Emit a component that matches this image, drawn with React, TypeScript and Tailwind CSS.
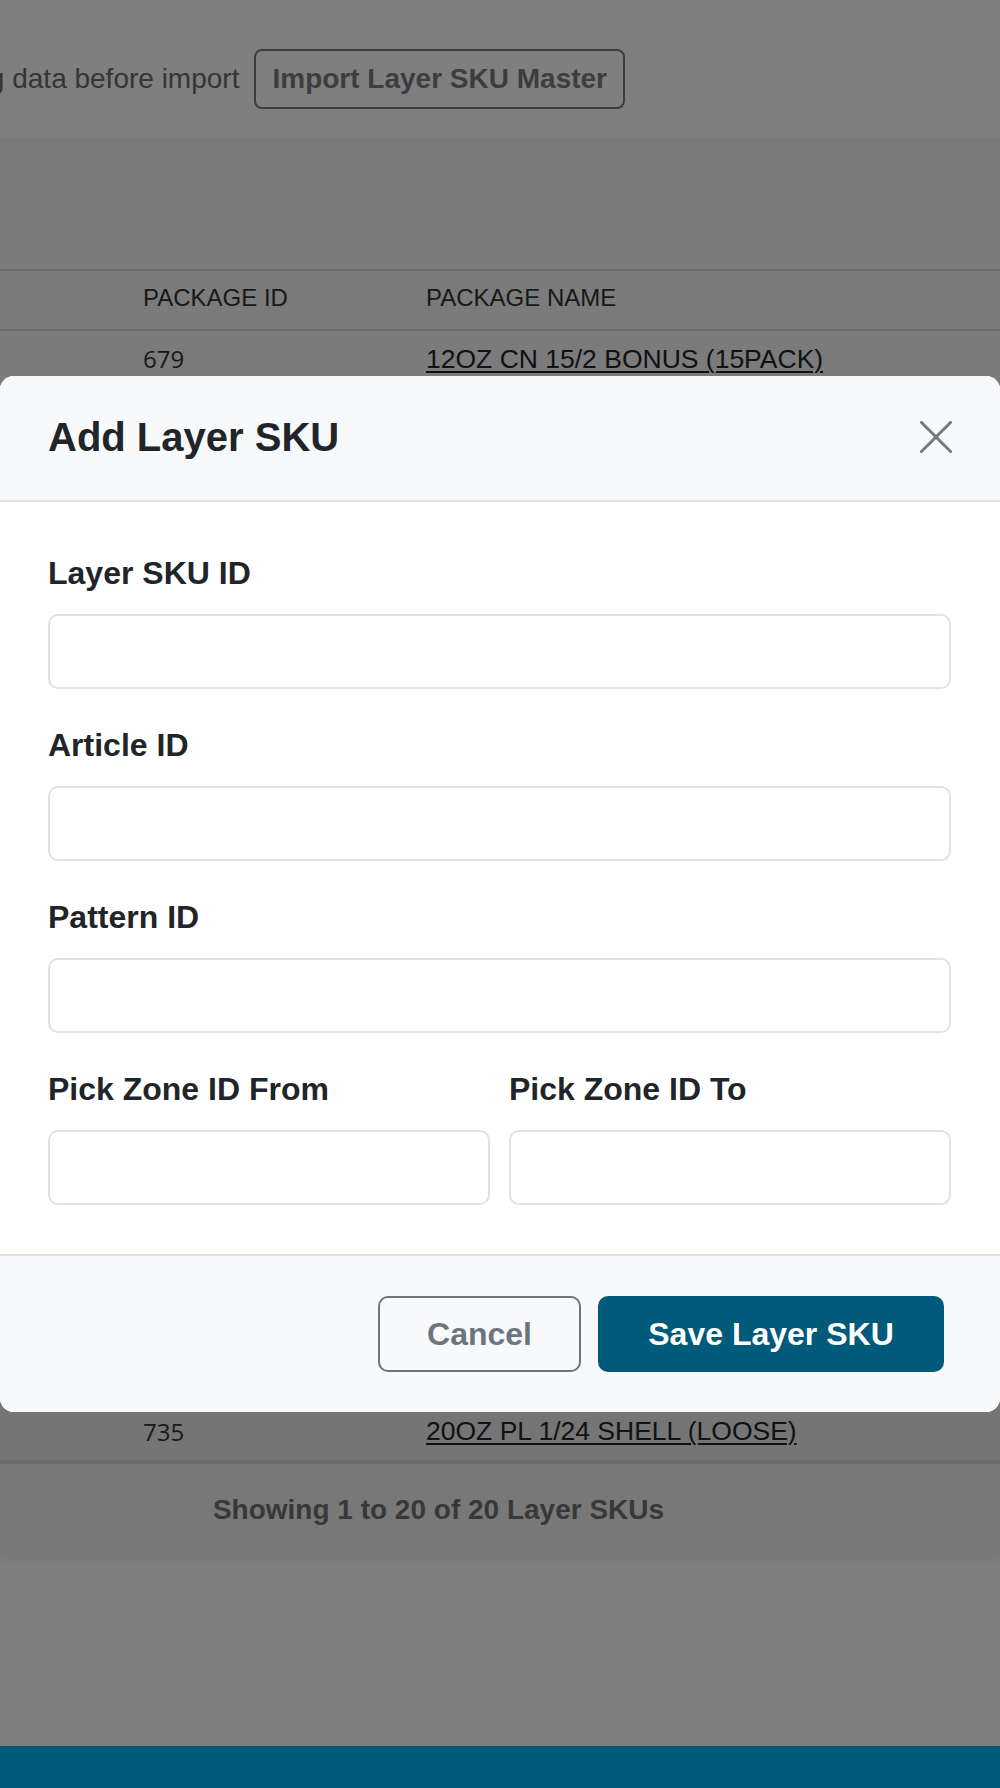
import React from "react";

const rows: [string, string][] = [
  ["679", "12OZ CN 15/2 BONUS (15PACK)"],
  ...Array.from({ length: 18 }, () => ["", ""] as [string, string]),
  ["735", "20OZ PL 1/24 SHELL (LOOSE)"],
];

function Field({ label, last }: { label: string; last?: boolean }) {
  return (
    <div className={last ? "" : "mb-[32px]"}>
      <label className="block text-[32px] leading-[48px] font-bold text-[#212529] mb-[17px]">
        {label}
      </label>
      <input
        type="text"
        className="block w-full h-[75px] border-2 border-[#dee2e6] rounded-[10px] bg-white px-4 text-[28px] outline-none"
      />
    </div>
  );
}

function HalfField({ label }: { label: string }) {
  return (
    <div>
      <label className="block text-[32px] leading-[48px] font-bold text-[#212529] mb-[17px] whitespace-nowrap">
        {label}
      </label>
      <input
        type="text"
        className="block w-full h-[75px] border-2 border-[#dee2e6] rounded-[10px] bg-white px-4 text-[28px] outline-none"
      />
    </div>
  );
}

export default function App() {
  return (
    <div className="relative w-[1000px] h-[1788px] overflow-hidden bg-white flex flex-col font-['Liberation_Sans',Arial,sans-serif]">
      {/* Top toolbar (scrolled horizontally) */}
      <div className="h-[142px] shrink-0 flex items-center justify-end gap-[15px] pt-[16px] pr-[375px] whitespace-nowrap">
        <span className="text-[28px] leading-[34px] text-[#6a6a6a]">
          Clear existing data before import
        </span>
        <button className="shrink-0 h-[60px] px-[16px] border-2 border-[#767c82] rounded-[8px] text-[28px] leading-[34px] font-bold text-[#767c82]">
          Import Layer SKU Master
        </button>
      </div>

      {/* Card with table */}
      <div className="shrink-0 bg-[#f6f6f6] shadow-[0_0_8px_rgba(0,0,0,0.14)]">
        <div className="h-[127px]" />
        <div className="flex items-center h-[62px] border-y-2 border-[#d8d8d8] pl-[143px] pb-[5px] text-[24px] leading-[29px] text-[#333333] uppercase">
          <div className="w-[283px]">Package ID</div>
          <div>Package Name</div>
        </div>
        {rows.map(([id, name], i) => (
          <div
            key={i}
            className={
              "flex items-center h-[56.45px] pl-[143px] " +
              (i % 2 === 1 ? "bg-[#ebebeb]" : "")
            }
          >
            <div className="w-[283px] text-[24px] leading-[30px] text-[#333333] font-['Open_Sans',sans-serif]">
              {id}
            </div>
            {name && (
              <a className="text-[26.5px] leading-[30.5px] text-[#212529] underline decoration-2 underline-offset-[3px] whitespace-nowrap">
                {name}
              </a>
            )}
          </div>
        ))}
        <div className="h-[97px] border-t-4 border-[#d4d4d4] bg-[#f0f0f0] flex items-center">
          <div className="w-[877px] text-center text-[28px] leading-[34px] font-bold text-[#707070]">
            Showing 1 to 20 of 20 Layer SKUs
          </div>
        </div>
      </div>

      <div className="flex-1" />

      {/* Backdrop */}
      <div className="absolute inset-0 bg-black/50 z-10" />

      {/* Modal */}
      <div className="absolute top-[376px] left-0 right-0 z-20 bg-white rounded-[14px] overflow-hidden">
        <div className="h-[126px] bg-[#f8f9fa] border-b-2 border-[#dee2e6] flex items-center justify-between px-[48px] pb-[2px]">
          <h2 className="text-[40px] leading-[48px] font-bold text-[#212529]">Add Layer SKU</h2>
          <button aria-label="Close" className="w-[32px] h-[32px] flex items-center justify-center">
            <svg width="32" height="32" viewBox="0 0 32 32" fill="none">
              <line x1="1.5" y1="1.5" x2="30.5" y2="30.5" stroke="#76797c" strokeWidth="3" strokeLinecap="round" />
              <line x1="30.5" y1="1.5" x2="1.5" y2="30.5" stroke="#76797c" strokeWidth="3" strokeLinecap="round" />
            </svg>
          </button>
        </div>
        <div className="pt-[47px] pb-[49px] pl-[48px] pr-[49px] bg-white">
          <Field label="Layer SKU ID" />
          <Field label="Article ID" />
          <Field label="Pattern ID" />
          <div className="grid grid-cols-2 gap-[19px]">
            <HalfField label="Pick Zone ID From" />
            <HalfField label="Pick Zone ID To" />
          </div>
        </div>
        <div className="h-[158px] bg-[#f8f9fa] border-t-2 border-[#dee2e6] flex items-center justify-end gap-[17px] pr-[56px]">
          <button className="w-[203px] h-[76px] border-2 border-[#6c757d] rounded-[10px] text-[32px] leading-[37px] font-bold text-[#6c757d] bg-transparent">
            Cancel
          </button>
          <button className="w-[346px] h-[76px] rounded-[10px] bg-[#005a7a] text-[32px] leading-[37px] font-bold text-white">
            Save Layer SKU
          </button>
        </div>
      </div>

      {/* Bottom bar */}
      <div className="relative z-30 h-[42px] shrink-0 bg-[#005a7a]" />
    </div>
  );
}
